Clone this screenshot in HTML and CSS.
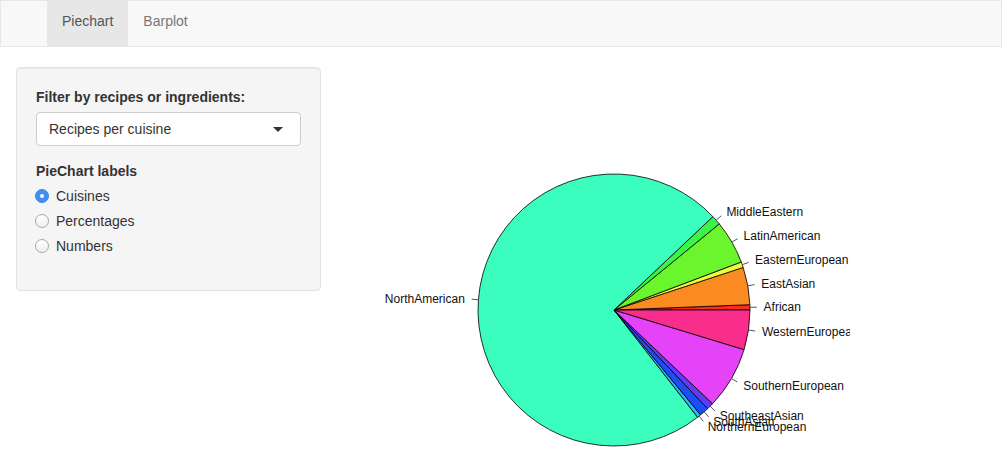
FILE: index.html
```html
<!DOCTYPE html>
<html>
<head>
<meta charset="utf-8">
<link rel="stylesheet" href="styles.css">
</head>
<body>
<nav class="navbar">
  <ul class="nav">
    <li class="tab active">Piechart</li>
    <li class="tab">Barplot</li>
  </ul>
</nav>
<div class="row">
  <div class="col side">
    <div class="well">
      <div class="group">
        <div class="label">Filter by recipes or ingredients:</div>
        <div class="select"><span>Recipes per cuisine</span><span class="caret"></span></div>
      </div>
      <div class="group">
        <div class="label">PieChart labels</div>
        <div class="radios">
          <div class="radio"><span class="dot on"></span>Cuisines</div>
          <div class="radio"><span class="dot"></span>Percentages</div>
          <div class="radio"><span class="dot"></span>Numbers</div>
        </div>
      </div>
    </div>
  </div>
  <div class="col main">
    <svg class="plot" width="500" height="404" viewBox="350 67 500 404" xmlns="http://www.w3.org/2000/svg">
      <g stroke="#000" stroke-width="0.8" stroke-linejoin="round">
        <path d="M614 310 L750 310 A136 136 0 0 0 749.90 304.68 Z" fill="#ff2a1f"/>
        <path d="M614 310 L749.90 304.68 A136 136 0 0 0 743.16 267.41 Z" fill="#fb8a22"/>
        <path d="M614 310 L743.16 267.41 A136 136 0 0 0 741.24 261.98 Z" fill="#effd3c"/>
        <path d="M614 310 L741.24 261.98 A136 136 0 0 0 719.28 223.91 Z" fill="#6bf52c"/>
        <path d="M614 310 L719.28 223.91 A136 136 0 0 0 712.89 216.63 Z" fill="#3af548"/>
        <path d="M614 310 L712.89 216.63 A136 136 0 1 0 697.64 417.24 Z" fill="#3afdbe"/>
        <path d="M614 310 L697.64 417.24 A136 136 0 0 0 700.62 414.84 Z" fill="#29b9f7"/>
        <path d="M614 310 L700.62 414.84 A136 136 0 0 0 707.65 408.62 Z" fill="#1e4cf6"/>
        <path d="M614 310 L707.65 408.62 A136 136 0 0 0 712.55 403.72 Z" fill="#5e3bf6"/>
        <path d="M614 310 L712.55 403.72 A136 136 0 0 0 744.10 349.63 Z" fill="#e443f8"/>
        <path d="M614 310 L744.10 349.63 A136 136 0 0 0 750 310 Z" fill="#f92d8c"/>
      </g>
      <g stroke="#555" stroke-width="1">
        <line x1="749.97" y1="307.34" x2="756.77" y2="307.21"/>
        <line x1="747.83" y1="285.81" x2="754.52" y2="284.60"/>
        <line x1="742.23" y1="264.68" x2="748.64" y2="262.42"/>
        <line x1="731.82" y1="242.06" x2="737.71" y2="238.66"/>
        <line x1="716.17" y1="220.24" x2="721.28" y2="215.75"/>
        <line x1="478.39" y1="299.73" x2="471.61" y2="299.21"/>
        <line x1="699.12" y1="416.07" x2="703.38" y2="421.37"/>
        <line x1="704.15" y1="411.82" x2="708.66" y2="416.91"/>
        <line x1="710.11" y1="406.22" x2="714.92" y2="411.03"/>
        <line x1="731.47" y1="378.54" x2="737.34" y2="381.97"/>
        <line x1="748.52" y1="330.04" x2="755.24" y2="331.04"/>
      </g>
      <g class="lbl">
        <text x="763.57" y="311.3">African</text>
        <text x="761.21" y="287.6">EastAsian</text>
        <text x="755.05" y="264.4">EasternEuropean</text>
        <text x="743.60" y="239.5">LatinAmerican</text>
        <text x="726.39" y="215.5">MiddleEastern</text>
        <text x="464.83" y="302.9" text-anchor="end">NorthAmerican</text>
        <text x="707.63" y="430.9">NorthernEuropean</text>
        <text x="713.17" y="426.2">SouthAsian</text>
        <text x="719.72" y="420.1">SoutheastAsian</text>
        <text x="743.21" y="389.6">SouthernEuropean</text>
        <text x="761.97" y="336.3">WesternEuropean</text>
      </g>
    </svg>
  </div>
</div>
</body>
</html>
```
FILE: styles.css
```css
html, body {
  margin: 0;
  padding: 0;
  background: #fff;
}
body {
  font-family: "Liberation Sans", Arial, sans-serif;
  font-size: 14px;
  line-height: 20px;
  color: #333;
}
.navbar {
  background: #f8f8f8;
  border: 1px solid #e7e7e7;
  margin: 0 2px 20px 0;
  height: 45px;
}
.nav {
  list-style: none;
  margin: 0;
  padding: 0 0 0 46px;
  display: flex;
}
.tab {
  padding: 10px 15px 15px;
  color: #777;
  line-height: 20px;
}
.tab.active {
  background: #e7e7e7;
  color: #555;
}
.row {
  display: grid;
  grid-template-columns: 1fr 2fr;
}
.col {
  padding: 0 15px;
  min-width: 0;
}
.col.side {
  padding: 0 14px 0 16px;
}
.well {
  background: #f5f5f5;
  border: 1px solid #e3e3e3;
  border-radius: 4px;
  padding: 19px;
  box-shadow: inset 0 1px 1px rgba(0,0,0,0.05);
}
.group {
  margin-bottom: 15px;
}
.label {
  font-weight: bold;
  margin-bottom: 5px;
}
.select {
  height: 34px;
  box-sizing: border-box;
  background: #fff;
  border: 1px solid #ccc;
  border-radius: 4px;
  padding: 6px 17px 6px 12px;
  display: flex;
  align-items: center;
  justify-content: space-between;
}
.caret {
  width: 0;
  height: 0;
  border-left: 5px solid transparent;
  border-right: 5px solid transparent;
  border-top: 5px solid #333;
  margin-top: 1px;
}
.radios {
  display: flex;
  flex-direction: column;
  gap: 5px;
}
.radio {
  display: flex;
  align-items: center;
  height: 20px;
}
.dot {
  width: 14px;
  height: 14px;
  box-sizing: border-box;
  border-radius: 50%;
  border: 1px solid #a8a8a8;
  background: linear-gradient(#fff, #f0f0f0);
  margin: 0 7px 0 -1px;
  display: flex;
  align-items: center;
  justify-content: center;
}
.dot.on {
  border-color: #3a86ec;
  background: #3d8ff5;
}
.dot.on::after {
  content: "";
  width: 4px;
  height: 4px;
  border-radius: 50%;
  background: #fff;
}
.plot {
  display: block;
}
.lbl text {
  font-family: "Liberation Sans", Arial, sans-serif;
  font-size: 12px;
  fill: #111;
}
```
